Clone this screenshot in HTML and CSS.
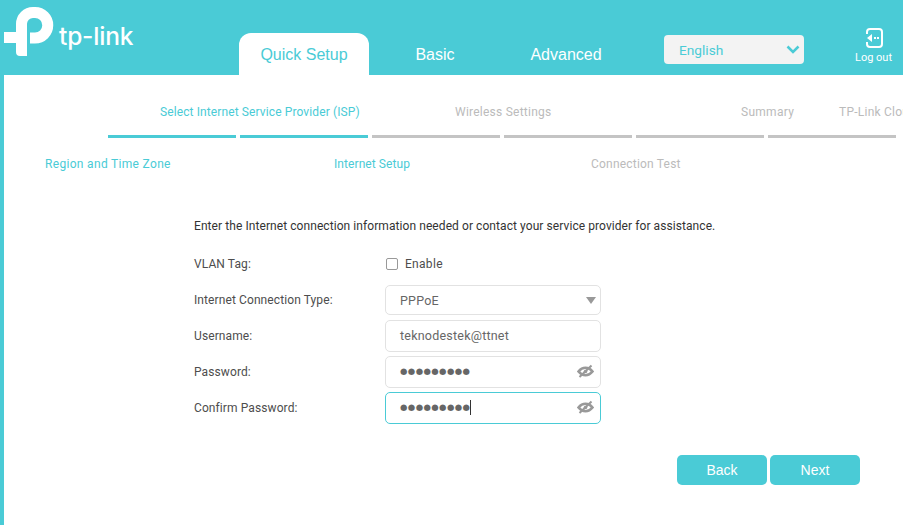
FILE: index.html
```html
<!DOCTYPE html>
<html lang="en">
<head>
    <meta charset="UTF-8">
    <title>TP-Link Quick Setup</title>
    <link rel="stylesheet" href="styles.css">
</head>
<body>
    <header class="top">
        <div class="logo">
            <svg class="logo-mark" width="56" height="57" viewBox="0 0 56 57">
                <path d="M21.500 33V24A11.500 11.500 0 0 1 33 12.500H35A12.750 12.750 0 0 1 35 38H30" fill="none" stroke="#fff" stroke-width="11"/>
                <path d="M4 32H27V56H20A4 4 0 0 1 16 52V43H4z" fill="#fff"/>
            </svg>
            <span class="logo-text">tp-link</span>
        </div>
        <nav class="tabs">
            <a class="tab active">Quick Setup</a>
            <a class="tab">Basic</a>
            <a class="tab">Advanced</a>
        </nav>
        <div class="lang">
            <span>English</span>
            <svg width="14" height="9" viewBox="0 0 14 9"><path d="M1.500 1.500 7 7l5.500-5.500" fill="none" stroke="#4acbd6" stroke-width="2.500"/></svg>
        </div>
        <div class="logout">
            <svg width="18" height="20" viewBox="0 0 18 20">
                <path d="M5 1h9a3 3 0 0 1 3 3v12a3 3 0 0 1-3 3H5a3 3 0 0 1-3-3v-2M2 6V4a3 3 0 0 1 3-3" fill="none" stroke="#fff" stroke-width="2"/>
                <path d="M2 10 7 6v8z" fill="#fff"/>
                <path d="M9 9h2v2H9zM12 9h2v2h-2z" fill="#fff"/>
            </svg>
            <span>Log out</span>
        </div>
    </header>

    <main class="content">
        <div class="steps-top">
            <span class="step-name on s1">Select Internet Service Provider (ISP)</span>
            <span class="step-name s2">Wireless Settings</span>
            <span class="step-name s3">Summary</span>
            <span class="step-name s4">TP-Link Cloud</span>
        </div>
        <div class="bars">
            <i class="bar on"></i>
            <i class="bar on"></i>
            <i class="bar"></i>
            <i class="bar"></i>
            <i class="bar"></i>
            <i class="bar"></i>
        </div>
        <div class="steps-bottom">
            <span class="step-name on b1">Region and Time Zone</span>
            <span class="step-name on b2">Internet Setup</span>
            <span class="step-name b3">Connection Test</span>
        </div>

        <form class="form">
            <p class="intro">Enter the Internet connection information needed or contact your service provider for assistance.</p>
            <div class="row vlan">
                <label>VLAN Tag:</label>
                <div class="check"><i class="box"></i><span>Enable</span></div>
            </div>
            <div class="row row-select">
                <label>Internet Connection Type:</label>
                <div class="field short"><span>PPPoE</span><i class="caret"></i></div>
            </div>
            <div class="row">
                <label>Username:</label>
                <div class="field"><span>teknodestek@ttnet</span></div>
            </div>
            <div class="row">
                <label>Password:</label>
                <div class="field">
                    <span class="dots">●●●●●●●●●</span>
                    <svg class="eye" width="17" height="14" viewBox="0 0 17 14"><use href="#eye"/></svg>
                </div>
            </div>
            <div class="row">
                <label>Confirm Password:</label>
                <div class="field focus">
                    <span class="dots">●●●●●●●●●</span><i class="cursor"></i>
                    <svg class="eye" width="17" height="14" viewBox="0 0 17 14"><use href="#eye"/></svg>
                </div>
            </div>
        </form>

        <div class="buttons">
            <button type="button" class="btn">Back</button>
            <button type="button" class="btn">Next</button>
        </div>
    </main>

    <svg width="0" height="0" class="defs">
        <symbol id="eye" viewBox="0 0 17 14">
            <path d="M1.500 7.500C3.500 5 5.500 3.800 8.500 3.800S13.500 5 15.500 7.500C13.500 10 11.500 11.200 8.500 11.200S3.500 10 1.500 7.500z" fill="none" stroke="#999" stroke-width="2.600"/>
            <circle cx="8.500" cy="7.500" r="1.800" fill="#999"/>
            <path d="M2.500 13 14.500 1.500" stroke="#999" stroke-width="2"/>
        </symbol>
    </svg>
</body>
</html>
```
FILE: styles.css
```css
body {
    margin: 0;
    font-family: "Roboto", "Liberation Sans", Arial, sans-serif;
    font-size: 12px;
    color: #4d4d4d;
    background: #4acbd6;
    height: 525px;
    overflow: hidden;
}
.defs {
    display: block;
}
.top {
    height: 75px;
    display: flex;
    align-items: flex-end;
}
.logo {
    width: 239px;
    height: 75px;
    display: flex;
    align-items: flex-start;
    flex-shrink: 0;
}
.logo-mark {
    display: block;
}
.logo-text {
    color: #fff;
    font-family: "Inter", "Liberation Sans", sans-serif;
    font-size: 24.500px;
    font-weight: 500;
    line-height: 30px;
    letter-spacing: -0.200px;
    margin: 21px 0 0 3px;
}
.tabs {
    display: flex;
    width: 425px;
}
.tab {
    width: 130px;
    height: 42px;
    line-height: 43px;
    text-align: center;
    font-family: "Liberation Sans", Arial, sans-serif;
    font-size: 16px;
    color: #fff;
    border-radius: 12px 12px 0 0;
}
.tab.active {
    background: #fff;
    color: #4acbd6;
}
.tab + .tab {
    margin-left: 1px;
}
.lang {
    width: 140px;
    height: 29px;
    margin-bottom: 11px;
    box-sizing: border-box;
    padding: 0 4px 0 15px;
    display: flex;
    align-items: center;
    justify-content: space-between;
    background: #f3f3f3;
    border-radius: 4px;
    color: #4acbd6;
    font-size: 13.700px;
}
.logout {
    width: 99px;
    display: flex;
    flex-direction: column;
    align-items: center;
    gap: 3px;
    padding-left: 40px;
    box-sizing: border-box;
    margin-bottom: 11px;
    color: #fff;
    font-size: 11px;
}
.content {
    margin-left: 4px;
    height: 450px;
    background: #fff;
    overflow: hidden;
    position: relative;
}
.step-name {
    color: #bbb;
    white-space: nowrap;
    position: absolute;
    letter-spacing: 0.110px;
}
.step-name.on {
    color: #4acbd6;
}
.steps-top {
    height: 54px;
}
.s1 { left: 156px; top: 30px; }
.s2 { left: 451px; top: 30px; letter-spacing: 0.240px; }
.s3 { left: 737px; top: 30px; letter-spacing: 0.280px; }
.s4 { left: 835px; top: 30px; letter-spacing: 0.240px; }
.b1 { left: 41px; top: 82px; letter-spacing: 0.320px; }
.b2 { left: 330px; top: 82px; letter-spacing: 0.080px; }
.b3 { left: 587px; top: 82px; letter-spacing: 0.200px; }
.bars {
    display: flex;
    gap: 4px;
    margin: 6px 0 0 104px;
}
.bar {
    width: 128px;
    height: 3px;
    background: #c4c4c4;
    flex-shrink: 0;
}
.bar.on {
    background: #4acbd6;
}
.steps-bottom {
    height: 22px;
}
.form {
    margin: 59px 0 0 190px;
}
.intro {
    margin: 0 0 23px;
    line-height: 14px;
    color: #333;
    letter-spacing: 0.075px;
}
.row {
    display: flex;
    align-items: center;
    margin-bottom: 4px;
}
.row-select {
    margin-bottom: 5px;
}
.row label {
    width: 191px;
    color: #4d4d4d;
    letter-spacing: 0.100px;
}
.vlan {
    height: 16px;
    margin-bottom: 13px;
}
.check {
    display: flex;
    align-items: center;
    gap: 7px;
    margin-left: 1px;
    letter-spacing: 0.300px;
}
.box {
    width: 10px;
    height: 10px;
    border: 1px solid #999;
    border-radius: 2px;
}
.field {
    width: 216px;
    height: 32px;
    box-sizing: border-box;
    border: 1px solid #e2e2e2;
    border-radius: 5px;
    padding: 0 6px 2px 14px;
    display: flex;
    align-items: center;
    position: relative;
    color: #666;
    font-size: 12.500px;
    letter-spacing: 0.220px;
}
.field.short {
    height: 30px;
    padding-bottom: 0;
}
.field.focus {
    border-color: #4acbd6;
}
.caret {
    position: absolute;
    right: 4px;
    top: 11px;
    border: 5.500px solid transparent;
    border-top: 7px solid #999;
    border-bottom: 0;
}
.dots {
    font-size: 8.500px;
    letter-spacing: 0.400px;
    color: #666;
    font-family: "DejaVu Sans", sans-serif;
}
.cursor {
    width: 1px;
    height: 15px;
    background: #333;
}
.eye {
    position: absolute;
    right: 6px;
    top: 7px;
}
.buttons {
    display: flex;
    gap: 3px;
    margin: 31px 0 0 673px;
}
.btn {
    width: 90px;
    height: 30px;
    border: 0;
    border-radius: 5px;
    background: #4acbd6;
    color: #fff;
    font-family: "Liberation Sans", Arial, sans-serif;
    font-size: 14px;
}
```
